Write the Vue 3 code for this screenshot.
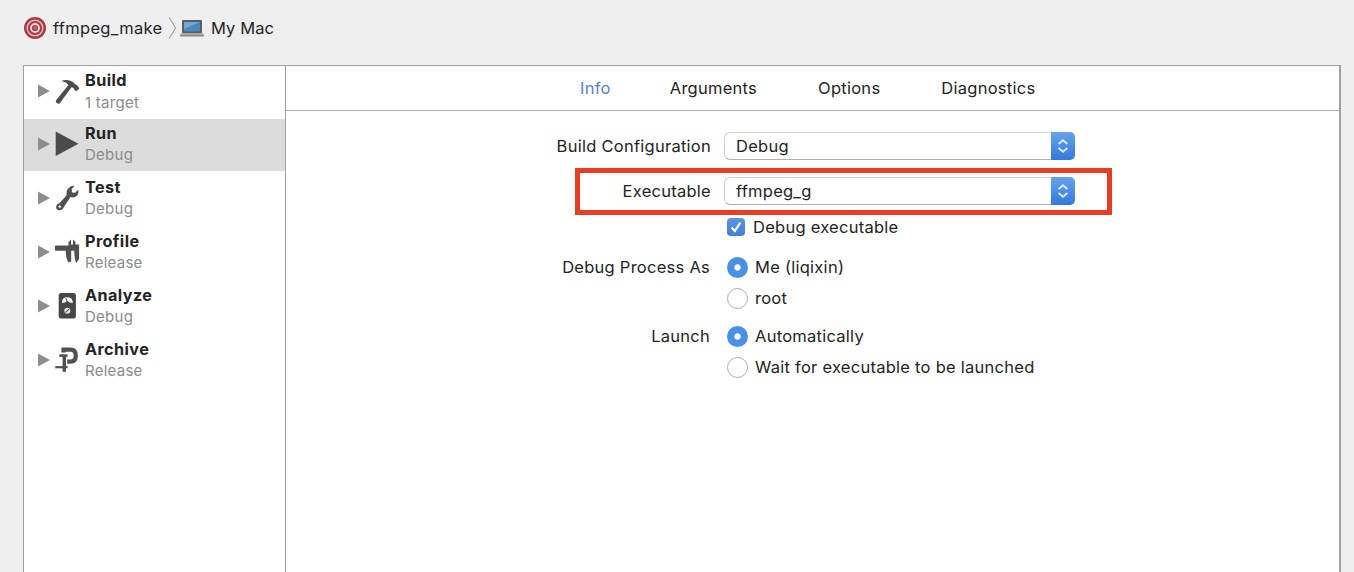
<script setup>
const phases = [
  { name: 'Build', detail: '1 target', icon: 'hammer' },
  { name: 'Run', detail: 'Debug', icon: 'play', selected: true },
  { name: 'Test', detail: 'Debug', icon: 'wrench' },
  { name: 'Profile', detail: 'Release', icon: 'caliper' },
  { name: 'Analyze', detail: 'Debug', icon: 'meter' },
  { name: 'Archive', detail: 'Release', icon: 'clamp' },
]
const tabs = ['Info', 'Arguments', 'Options', 'Diagnostics']
</script>

<template>
  <div class="window">
    <header class="crumbs">
      <svg class="target" width="24" height="24" viewBox="0 0 24 24">
        <circle cx="12" cy="12" r="11" fill="#a93b44" />
        <circle cx="12" cy="12" r="7.8" fill="none" stroke="#e3b9bc" stroke-width="1.5" />
        <circle cx="12" cy="12" r="4" fill="none" stroke="#f0dcdd" stroke-width="1.8" />
        <circle cx="12" cy="12" r="1.4" fill="#c47880" />
      </svg>
      <span class="crumb project">ffmpeg_make</span>
      <svg class="sep" width="9" height="24" viewBox="0 0 9 24">
        <path d="M1.2 1.5L7.6 12L1.2 22.5" fill="none" stroke="#a8a8a8" stroke-width="1.3" />
      </svg>
      <svg class="laptop" width="26" height="18" viewBox="0 0 26 18">
        <rect x="3" y="1" width="20" height="13" rx="1" fill="#5b5d61" />
        <rect x="5" y="3" width="16" height="9.5" fill="#4a86bf" />
        <path d="M5 3H21L5 10Z" fill="#75a7d3" />
        <path d="M2.5 14H23.5L25.2 16.4Q25 17.3 24 17.3H2Q1 17.3 .8 16.4Z" fill="#a4a7ab" />
        <path d="M1.2 16.8H24.8" stroke="#74777b" stroke-width="1" />
      </svg>
      <span class="crumb mac">My Mac</span>
    </header>

    <main class="panel">
      <aside class="sidebar">
        <div v-for="p in phases" :key="p.name" class="phase" :class="{ selected: p.selected }">
          <svg class="tri" width="12" height="14" viewBox="0 0 12 14"><path d="M0 .5L12 7L0 13.5Z" fill="#8e8e8e" /></svg>
          <svg class="glyph" width="28" height="28" viewBox="0 0 28 28">
            <g v-if="p.icon === 'hammer'" fill="#4e4e4e">
              <path d="M7.2 2.9C11 1.3 15.5 1.7 19 4.1L21.2 6.2L23.2 7.3L25.4 10.2L22.8 13.1L20.8 12.4L19.5 10L17.5 9.2L5.8 25.2Q4.3 26.4 2.7 25Q1 23.6 2.2 22L14.3 7.3Q13.4 4.3 7.2 2.9Z" />
            </g>
            <path v-else-if="p.icon === 'play'" d="M1.7 1.5L24.5 13.7L1.7 25.9Z" fill="#4b4b4b" />
            <g v-else-if="p.icon === 'wrench'">
              <path d="M20.5 1.8L17.7 5.2L18 8.5L21.1 8.7L24.2 5.8Q25.3 10.7 21.6 12.8Q19.4 14 16.6 13.1L10.3 22.2Q8.8 26.6 4.8 26.3Q1.4 25.5 2.3 21.8Q3 19.4 5.7 19L12.8 11Q11.8 7 14.4 4.2Q17 1.5 20.5 1.8Z" fill="#515151" />
              <circle cx="5.8" cy="22.6" r="1.2" fill="#fff" />
            </g>
            <g v-else-if="p.icon === 'caliper'" fill="#515151">
              <path d="M.9 8.5Q.9 7.5 2 7.5H14.5V4L17 1.5V6.5H19V1.5L21.5 4V6.5H25.1V21L22 25.3Q20.3 20 20.3 12.7H17.2V23.5L14.6 24.5Q11.8 21 11.8 12.7H2Q.9 12.7 .9 11.7Z" />
            </g>
            <g v-else-if="p.icon === 'meter'">
              <rect x="4.7" y="1" width="17.2" height="25.5" rx="2.5" fill="#474747" />
              <path d="M7.8 11Q7.8 5.3 13.3 5.3Q18.8 5.3 18.8 11L15.5 10.5Q14.4 9.2 13.3 9.2Q12.2 9.2 11.1 10.5Z" fill="#f7f7f7" />
              <path d="M13.5 10.5L12 6.3" stroke="#474747" stroke-width="1" />
              <circle cx="13.3" cy="18.7" r="3" fill="#e5e5e5" />
              <path d="M11.5 20.3L15.1 17.1" stroke="#555" stroke-width="1.1" />
            </g>
            <g v-else fill="none" stroke="#505050">
              <path d="M9.5 6.5V3.6H16.5Q21.8 3.6 21.8 9.7Q21.8 15.6 16.5 15.6H13.2" stroke-width="4.2" />
              <path d="M5.3 9.6H13.6" stroke-width="2.6" />
              <path d="M10.3 9V25.8" stroke-width="3.4" />
              <path d="M1.3 21.2H13.6" stroke-width="2.2" />
            </g>
          </svg>
          <div class="words">
            <span class="name">{{ p.name }}</span>
            <span class="detail">{{ p.detail }}</span>
          </div>
        </div>
      </aside>

      <section class="content">
        <nav class="tabs">
          <span v-for="(t, i) in tabs" :key="t" class="tab" :class="{ active: i === 0 }">{{ t }}</span>
        </nav>

        <div class="form">
          <div class="row config">
            <span class="label">Build Configuration</span>
            <div class="select">
              <span>Debug</span>
              <i class="stepper"><svg width="12" height="16" viewBox="0 0 12 16"><path d="M1.6 5.9L6 2.2L10.4 5.9M1.6 10.1L6 13.8L10.4 10.1" fill="none" stroke="#dceaff" stroke-width="2" /></svg></i>
            </div>
          </div>
          <div class="row exec">
            <span class="label">Executable</span>
            <div class="select">
              <span>ffmpeg_g</span>
              <i class="stepper"><svg width="12" height="16" viewBox="0 0 12 16"><path d="M1.6 5.9L6 2.2L10.4 5.9M1.6 10.1L6 13.8L10.4 10.1" fill="none" stroke="#dceaff" stroke-width="2" /></svg></i>
            </div>
            <div class="highlight"></div>
          </div>
          <div class="row check">
            <span class="label"></span>
            <i class="box"><svg width="18" height="18" viewBox="0 0 18 18"><path d="M4.6 9.5L7.8 13L13.3 4.7" fill="none" stroke="#fff" stroke-width="2.1" /></svg></i>
            <span class="opt">Debug executable</span>
          </div>
          <div class="row me">
            <span class="label short">Debug Process As</span>
            <i class="radio on"></i><span class="opt">Me (liqixin)</span>
          </div>
          <div class="row root">
            <span class="label"></span>
            <i class="radio"></i><span class="opt">root</span>
          </div>
          <div class="row auto">
            <span class="label short">Launch</span>
            <i class="radio on"></i><span class="opt">Automatically</span>
          </div>
          <div class="row wait">
            <span class="label"></span>
            <i class="radio"></i><span class="opt">Wait for executable to be launched</span>
          </div>
        </div>
      </section>
    </main>
  </div>
</template>

<style>
body { background: #efefef; overflow: hidden; }
</style>

<style scoped>
.window {
  box-sizing: border-box;
  width: 1354px;
  height: 572px;
  overflow: hidden;
  display: flex;
  flex-direction: column;
  background: #efefef;
  color: #242424;
  font-family: Inter, "Liberation Sans", sans-serif;
  font-size: 16.5px;
  letter-spacing: 0.26px;
  white-space: nowrap;
}
svg { display: block; flex: none; }
.crumbs { display: flex; align-items: center; box-sizing: border-box; height: 65px; padding: 0 0 9px 23px; }
.project { width: 109px; margin-left: 6px; letter-spacing: 0.32px; }
.sep { margin-left: 6px; }
.laptop { margin-left: 2px; }
.mac { margin-left: 6px; letter-spacing: 0.1px; }

.panel {
  flex: 1;
  display: flex;
  box-sizing: border-box;
  width: 1318px;
  margin-left: 23px;
  border: solid #a0a0a0;
  border-width: 1px 2px 0 1px;
  background: #fff;
}
.sidebar { width: 261px; flex: none; border-right: 1px solid #a0a0a0; }
.phase { display: flex; align-items: center; box-sizing: border-box; height: 54px; padding-left: 14px; }
.phase:first-child { height: 53px; padding-bottom: 2px; }
.phase.selected { height: 52px; padding-bottom: 2px; background: #dcdcdc; }
.glyph { margin-left: 4px; }
.tri { margin-top: -1px; }
.words { display: flex; flex-direction: column; margin-left: 3px; }
.name { font-weight: 700; font-size: 16.2px; letter-spacing: 0.42px; line-height: 22px; }
.phase:first-child .name { position: relative; top: -1px; }
.detail { font-size: 15px; line-height: 22px; color: #8b8b8b; }

.content { flex: 1; }
.tabs { display: flex; align-items: center; box-sizing: border-box; height: 45px; border-bottom: 1px solid #acacac; padding-left: 294px; }
.tab { margin-right: 61px; }
.tab:first-child { margin-right: 59px; }
.tab.active { color: #5585cb; }

.form { display: flex; flex-direction: column; padding-top: 21px; }
.row { display: flex; align-items: center; height: 28px; position: relative; }
.label { width: 425px; text-align: right; margin-right: 13px; }
.label.short { width: 424px; margin-right: 14px; }
.select {
  display: flex;
  align-items: center;
  justify-content: space-between;
  box-sizing: border-box;
  width: 351px;
  height: 28px;
  padding-left: 11px;
  border: 1px solid #d2d2d2;
  border-bottom-color: #b0b0b0;
  border-right: 0;
  border-radius: 6px;
  letter-spacing: 0.25px;
}
.stepper {
  display: flex;
  align-items: center;
  justify-content: center;
  width: 24px;
  height: 28px;
  margin: -1px 0;
  border-radius: 0 5px 5px 0;
  background: linear-gradient(#67a3ec, #3478de);
}
.exec { margin-top: 17px; }
.highlight {
  position: absolute;
  left: 289px;
  top: -9px;
  box-sizing: border-box;
  width: 537px;
  height: 47px;
  border: 5px solid #ea3b24;
}
.check { margin-top: 8px; }
.box { width: 18px; height: 18px; margin: 0 8px 0 3px; border-radius: 4px; background: linear-gradient(#5a96e2, #417fda); }
.me { margin-top: 12px; }
.root { margin-top: 3px; }
.auto { margin-top: 10px; }
.wait { margin-top: 3px; }
.radio {
  box-sizing: border-box;
  width: 21px;
  height: 21px;
  margin: 0 7px 0 3px;
  border: 1.5px solid #adadad;
  border-radius: 50%;
}
.radio.on { border: 0; background: radial-gradient(circle, #fff 0 2.7px, #4a90e4 3.7px); }
</style>
